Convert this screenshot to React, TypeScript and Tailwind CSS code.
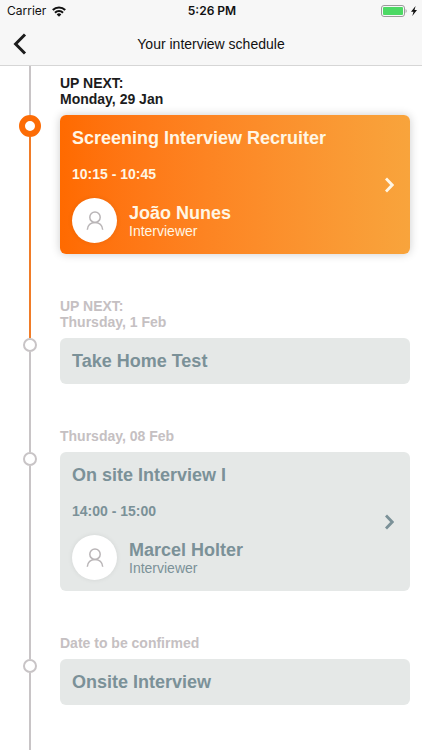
import clsx from "clsx";

type Interview = {
  date: string;
  title: string;
  time?: string;
  interviewer?: string;
  upNext?: boolean;
  current?: boolean;
};

const interviews: Interview[] = [
  {
    date: "Monday, 29 Jan",
    title: "Screening Interview Recruiter",
    time: "10:15 - 10:45",
    interviewer: "João Nunes",
    upNext: true,
    current: true,
  },
  { date: "Thursday, 1 Feb", title: "Take Home Test", upNext: true },
  {
    date: "Thursday, 08 Feb",
    title: "On site Interview I",
    time: "14:00 - 15:00",
    interviewer: "Marcel Holter",
  },
  { date: "Date to be confirmed", title: "Onsite Interview" },
];

function StatusBar() {
  return (
    <div className="grid h-[22px] grid-cols-3 items-center pl-[7px] pr-[5px] font-['Inter',sans-serif] text-xs text-[#111111]">
      <div className="flex items-center gap-1.5">
        <span>Carrier</span>
        <svg width="14" height="11" viewBox="0 0 14 11" fill="none" stroke="#111111" strokeWidth="2.1">
          <path d="M0.8 4.1a8.8 8.8 0 0 1 12.4 0" />
          <path d="M3 6.700a5.700 5.700 0 0 1 8 0" />
          <path d="M7 10.700L4.700 8.400a3.200 3.200 0 0 1 4.600 0z" fill="#111111" stroke="none" />
        </svg>
      </div>
      <span className="text-center font-semibold">5:26 PM</span>
      <div className="flex items-center justify-end gap-1">
        <svg width="26" height="12" viewBox="0 0 26 12">
          <rect x="0.5" y="0.5" width="23" height="11" rx="2.5" fill="none" stroke="#9b9b9b" />
          <rect x="2" y="2" width="20" height="8" rx="1" fill="#4cd964" />
          <path d="M24.6 4v4c1.4-.5 1.4-3.5 0-4z" fill="#9b9b9b" />
        </svg>
        <svg width="6" height="10" viewBox="0 0 6 10" fill="#111111">
          <path d="M4.6 0L0 5.800h2.500L1.300 10 6 4.100H3.500z" />
        </svg>
      </div>
    </div>
  );
}

function Avatar() {
  return (
    <span className="flex size-[45px] shrink-0 items-center justify-center rounded-full bg-white shadow-[0_0_5px_rgba(0,0,0,0.08)]">
      <svg width="18" height="20" viewBox="0 0 18 20" fill="none" stroke="#b9b5b7" strokeWidth="1.5">
        <circle cx="9" cy="6.2" r="5.2" />
        <path d="M1.300 18.800c.3-4.500 3.500-7.400 7.700-7.400s7.400 2.900 7.700 7.400" />
      </svg>
    </span>
  );
}

function Card({ item }: { item: Interview }) {
  const look = clsx(
    "block w-full rounded-md px-3 py-[11px] text-left",
    item.current
      ? "bg-linear-to-r from-[#ff6a00] to-[#f8a43c] text-[#fff6e4] shadow-[0_0_10px_rgba(0,0,0,0.2)]"
      : "bg-[#e5e8e7] text-[#7b9198]"
  );

  if (!item.interviewer) {
    return (
      <div className={look}>
        <h2 className="text-lg leading-6 font-bold">{item.title}</h2>
      </div>
    );
  }

  return (
    <button type="button" className={clsx(look, "cursor-pointer")}>
      <span className="flex items-center justify-between">
        <span>
          <span className="block text-lg leading-6 font-bold">{item.title}</span>
          <span className="mt-4 block text-sm leading-4 font-bold">{item.time}</span>
          <span className="mt-4 flex items-center gap-3">
            <Avatar />
            <span>
              <span className="block text-lg leading-5 font-bold">{item.interviewer}</span>
              <span className="block text-sm leading-4">Interviewer</span>
            </span>
          </span>
        </span>
        <svg
          className="mr-1 shrink-0"
          width="9"
          height="16"
          viewBox="0 0 9 16"
          fill="none"
          stroke="currentColor"
          strokeWidth="2.8"
        >
          <path d="M1 1.500L7.200 8L1 14.500" />
        </svg>
      </span>
    </button>
  );
}

function TimelineItem({ item, reached, last }: { item: Interview; reached: boolean; last: boolean }) {
  return (
    <li className={clsx("grid grid-cols-[60px_1fr] grid-rows-[auto_1fr]", last && "grow")}>
      <div className="flex justify-center">
        <span className={clsx("w-0.5", reached ? "bg-[#f07c28]" : "bg-[#c8c4c6]")} />
      </div>
      <p
        className={clsx(
          "pb-2 text-sm leading-4 font-bold",
          item.current ? "pt-[9px] text-[#1c1c1c]" : "text-[#c5c0c2]"
        )}
      >
        {item.upNext && <span className="block">UP NEXT:</span>}
        {item.date}
      </p>

      <div className="flex flex-col items-center">
        <span
          className={clsx(
            "shrink-0 rounded-full bg-white",
            item.current ? "size-[22px] border-[6px] border-[#fc6c06]" : "size-[14px] border-2 border-[#c8c4c6]"
          )}
        />
        <span className={clsx("w-0.5 grow", item.current ? "bg-[#f07c28]" : "bg-[#c8c4c6]")} />
      </div>
      <div className="pb-11">
        <Card item={item} />
      </div>
    </li>
  );
}

export default function App() {
  return (
    <div className="flex min-h-screen flex-col bg-white font-['Liberation_Sans',Arial,sans-serif]">
      <header className="border-b border-[#d6d6d6] bg-[#f7f7f7]">
        <StatusBar />
        <div className="grid h-[43px] grid-cols-[44px_1fr_44px] items-center">
          <button type="button" aria-label="Back" className="flex h-full cursor-pointer items-center pl-[13px]">
            <svg width="14" height="22" viewBox="0 0 14 22" fill="none" stroke="#1c1c1c" strokeWidth="3">
              <path d="M12 1.500L2.600 11L12 20.500" />
            </svg>
          </button>
          <h1 className="text-center text-sm text-[#111111]">Your interview schedule</h1>
        </div>
      </header>

      <main className="flex grow flex-col pr-3">
        <ol className="flex grow flex-col">
          {interviews.map((item, i) => (
            <TimelineItem
              key={item.date}
              item={item}
              reached={i > 0 && !!interviews[i - 1].current}
              last={i === interviews.length - 1}
            />
          ))}
        </ol>
      </main>
    </div>
  );
}
